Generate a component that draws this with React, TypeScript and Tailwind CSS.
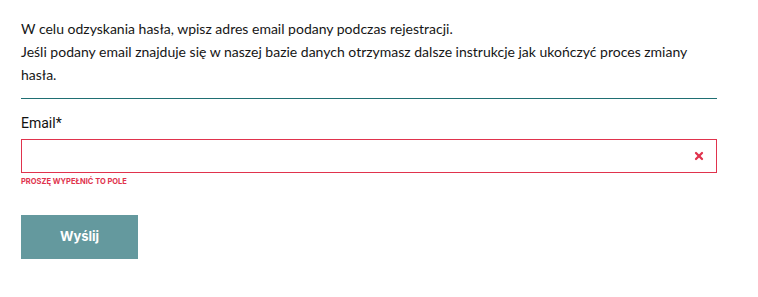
import { X } from "lucide-react";

export default function App() {
  return (
    <div className="min-h-screen bg-white px-[21px] pt-[17px] font-['Lato',sans-serif] text-[#161616]">
      <div className="w-[696px]">
        <p className="text-[14px] leading-[23px]">
          W celu odzyskania hasła, wpisz adres email podany podczas rejestracji.
          <br />
          Jeśli podany email znajduje się w naszej bazie danych otrzymasz dalsze instrukcje jak ukończyć proces zmiany
          <br />
          hasła.
        </p>
        <div className="mt-[12px] h-px bg-[#1f6f73]" />

        <form className="mt-[16px]">
          <label className="block font-['Roboto',sans-serif] text-[14px] leading-[16px] text-[#111]">Email*</label>
          <div className="relative mt-[8px]">
            <input
              type="email"
              className="block h-[34px] w-full border border-[#e0334d] bg-white px-3 text-[14px] outline-none"
            />
            <X className="absolute right-[12px] top-[11px] h-[12px] w-[12px] text-[#e0334d]" strokeWidth={4.5} />
          </div>
          <p className="mt-[4px] font-['Inter',sans-serif] text-[7.5px] font-bold uppercase leading-[10px] text-[#e0334d]">Proszę wypełnić to pole</p>

          <button
            type="button"
            className="mt-[28px] flex h-[44px] w-[117px] items-center justify-center bg-[#64999e] font-['Inter',sans-serif] text-[13px] font-bold text-white"
          >
            Wyślij
          </button>
        </form>
      </div>
    </div>
  );
}
